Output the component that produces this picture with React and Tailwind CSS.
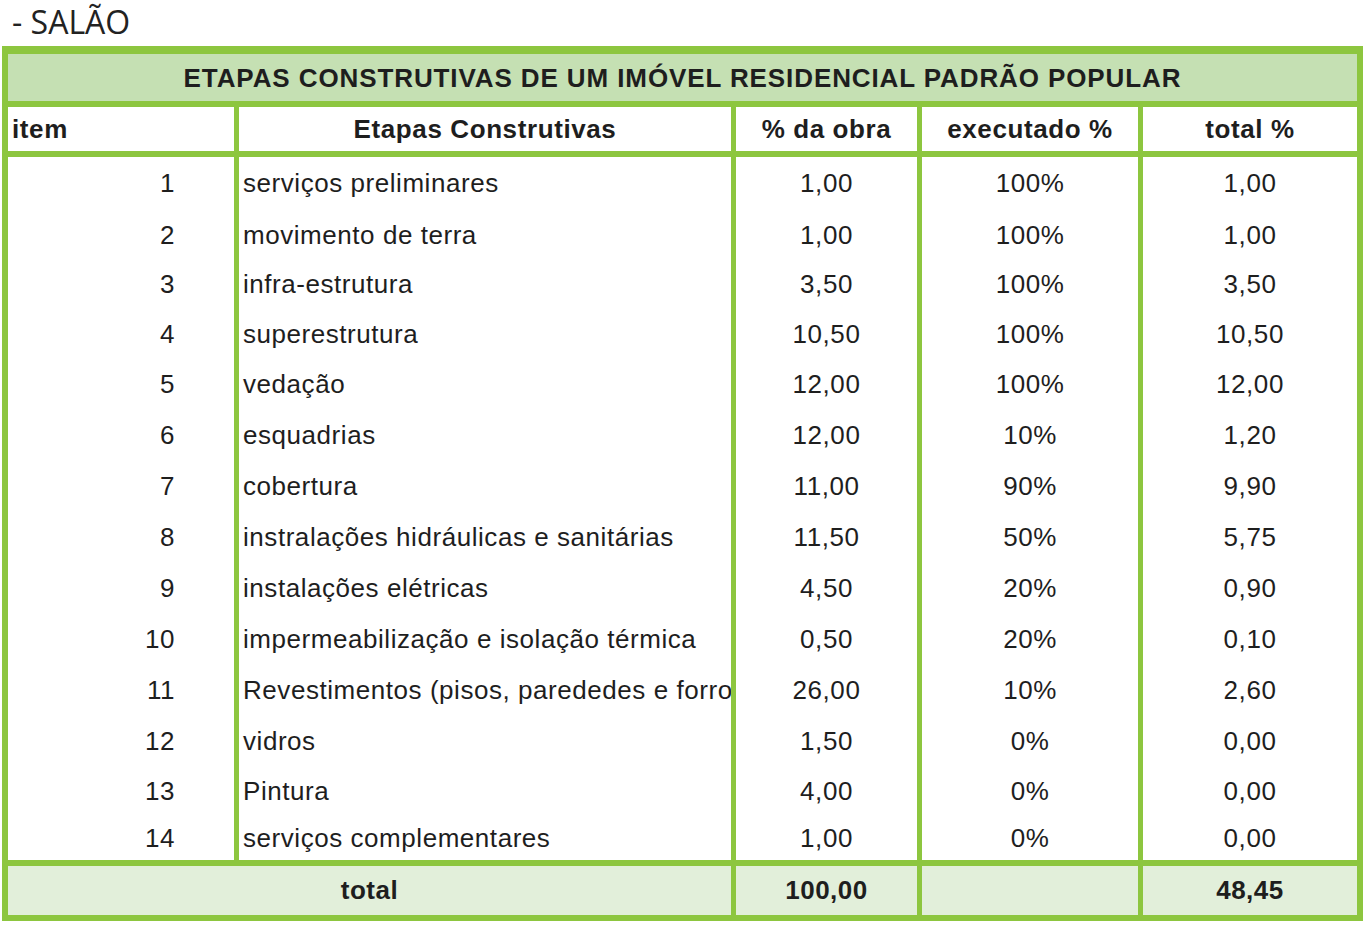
import React from 'react';

const rows = [
  [1, 'serviços preliminares', '1,00', '100%', '1,00', 53],
  [2, 'movimento de terra', '1,00', '100%', '1,00', 50],
  [3, 'infra-estrutura', '3,50', '100%', '3,50', 49],
  [4, 'superestrutura', '10,50', '100%', '10,50', 50],
  [5, 'vedação', '12,00', '100%', '12,00', 51],
  [6, 'esquadrias', '12,00', '10%', '1,20', 51],
  [7, 'cobertura', '11,00', '90%', '9,90', 51],
  [8, 'instralações hidráulicas e sanitárias', '11,50', '50%', '5,75', 51],
  [9, 'instalações elétricas', '4,50', '20%', '0,90', 51],
  [10, 'impermeabilização e isolação térmica', '0,50', '20%', '0,10', 51],
  [11, 'Revestimentos (pisos, parededes e forro)', '26,00', '10%', '2,60', 51],
  [12, 'vidros', '1,50', '0%', '0,00', 51],
  [13, 'Pintura', '4,00', '0%', '0,00', 49],
  [14, 'serviços complementares', '1,00', '0%', '0,00', 44],
];

const green = 'border-[#8dc63f]';

export default function App() {
  return (
    <div className="bg-white w-[1366px] h-[928px] text-[#1e1e1e]" style={{ fontFamily: '"Liberation Sans", Arial, sans-serif' }}>
      {/* title */}
      <div className="h-[46px] pl-[12px] pt-[2px] text-[32px] leading-[40px] text-[#222]" style={{ fontFamily: '"Open Sans", sans-serif' }}>
        - SALÃO
      </div>

      <div className={`ml-[2px] w-[1361px] border-[6px] ${green} border-t-[8px]`}>
        {/* band */}
        <div className="h-[47px] bg-[#c5e0b3] flex items-center justify-center font-bold text-[26px] tracking-[0.9px] pt-[2px]">
          ETAPAS CONSTRUTIVAS DE UM IMÓVEL RESIDENCIAL PADRÃO POPULAR
        </div>

        {/* header row */}
        <div className={`flex h-[56px] border-t-[6px] border-b-[6px] ${green} font-bold text-[26px] tracking-[0.6px]`}>
          <div className="w-[226px] flex items-center pl-[4px]">item</div>
          <div className={`w-[497px] border-l-[5px] ${green} flex items-center justify-center`}>Etapas Construtivas</div>
          <div className={`w-[186px] border-l-[5px] ${green} flex items-center justify-center`}>% da obra</div>
          <div className={`w-[221px] border-l-[5px] ${green} flex items-center justify-center`}>executado %</div>
          <div className={`flex-1 border-l-[5px] ${green} flex items-center justify-center`}>total %</div>
        </div>

        {/* body */}
        <div className="text-[26px] tracking-[0.55px]">
          {rows.map(([n, label, pct, exec, total, h]) => (
            <div key={n} className="flex" style={{ height: h }}>
              <div className="w-[226px] flex items-center justify-end pr-[59px]">{n}</div>
              <div className={`w-[497px] border-l-[5px] ${green} flex items-center pl-[4px] overflow-hidden whitespace-nowrap`}>{label}</div>
              <div className={`w-[186px] border-l-[5px] ${green} flex items-center justify-center`}>{pct}</div>
              <div className={`w-[221px] border-l-[5px] ${green} flex items-center justify-center`}>{exec}</div>
              <div className={`flex-1 border-l-[5px] ${green} flex items-center justify-center`}>{total}</div>
            </div>
          ))}
        </div>

        {/* total */}
        <div className={`flex h-[55px] border-t-[6px] ${green} bg-[#e2efda] font-bold text-[26px] tracking-[0.5px]`}>
          <div className="w-[723px] flex items-center justify-center">total</div>
          <div className={`w-[186px] border-l-[5px] ${green} flex items-center justify-center`}>100,00</div>
          <div className={`w-[221px] border-l-[5px] ${green}`}></div>
          <div className={`flex-1 border-l-[5px] ${green} flex items-center justify-center`}>48,45</div>
        </div>
      </div>
    </div>
  );
}
